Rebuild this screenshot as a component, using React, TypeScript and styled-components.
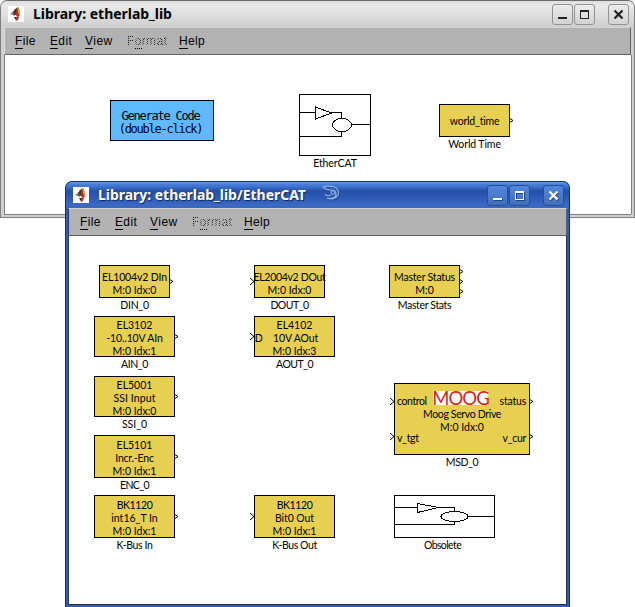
import React from "react";
import styled, { createGlobalStyle, css } from "styled-components";

const Global = createGlobalStyle`
  html, body { margin: 0; padding: 0; }
  body { width: 635px; height: 607px; overflow: hidden; background: #fff; }
  * { box-sizing: border-box; }
`;

const Desktop = styled.div`
  position: relative;
  width: 635px;
  height: 607px;
  overflow: hidden;
  background: #fff;
`;

const BackWindow = styled.section`
  position: absolute;
  left: 0;
  top: 0;
  width: 635px;
  height: 218px;
  display: flex;
  flex-direction: column;
  padding: 0 3px 3px;
  border: 1px solid #808080;
  border-top-color: #6c6c6c;
  border-radius: 7px 7px 0 0;
  background: #d0d0d0;
`;

const FrontWindow = styled.section`
  position: absolute;
  left: 65px;
  top: 181px;
  width: 505px;
  height: 426px;
  display: flex;
  flex-direction: column;
  padding: 0 2px 2px;
  border: 1px solid #152f66;
  border-bottom-width: 0;
  border-radius: 7px 7px 0 0;
  background: #2e5cb6;
`;

const TitleBar = styled.header<{ $active?: boolean }>`
  display: flex;
  align-items: center;
  flex: none;
  height: 26px;
  margin: 0 ${(p) => (p.$active ? "-2px" : "-3px")};
  padding: 0 5px 0 7px;
  border-radius: 6px 6px 0 0;
  font: bold 14px/18px "Noto Sans", sans-serif;
  ${(p) =>
    p.$active
      ? css`
          color: #fff;
          text-shadow: 1px 1px 1px #10285c;
          background: linear-gradient(#6c9ff0 0, #4a80dc 2px, #3b70cb 5px, #2850a4 9px, #2b57b2 14px, #3b69c4 23px, #3a68c0 26px);
        `
      : css`
          color: #000;
          background: linear-gradient(#dedede 0, #e8e8e8 4px, #dedede 14px, #cecece 26px);
        `}
`;

const Title = styled.h1`
  margin: 0 0 0 9px;
  font: inherit;
  letter-spacing: -0.03px;
  white-space: nowrap;
`;

const Controls = styled.div`
  display: flex;
  gap: 1px;
  margin-left: auto;
`;

const ControlButton = styled.button<{ $active?: boolean; $gap?: boolean }>`
  display: grid;
  place-items: center;
  width: 21px;
  height: 21px;
  margin: 0 0 0 ${(p) => (p.$gap ? 12 : 0)}px;
  padding: 0;
  border-radius: 3px;
  ${(p) =>
    p.$active
      ? css`
          border: 1px solid #284f94;
          color: #fff;
          background: linear-gradient(#5286dd, #416fb9);
          svg { filter: drop-shadow(1px 1px 0 #234680); }
        `
      : css`
          border: 1px solid #929292;
          color: #222;
          background: linear-gradient(#ececec, #d2d2d2);
        `}
`;

const MenuBar = styled.nav<{ $active?: boolean }>`
  display: flex;
  flex: none;
  height: 28px;
  padding: 6px 0 0 ${(p) => (p.$active ? 11 : 10)}px;
  border-top: 1px solid #d4d4d4;
  border-bottom: 1px solid #636363;
  border-right: 1px solid #606060;
  border-left: 1px solid ${(p) => (p.$active ? "#2a3a5c" : "#dcdcdc")};
  background: #b2b2b2;
  font: 12px/15px "Liberation Sans", sans-serif;
  letter-spacing: 0.35px;
`;

const MenuItem = styled.span<{ $width: number; $disabled?: boolean }>`
  width: ${(p) => p.$width}px;
  white-space: nowrap;
  color: #000;
  ${(p) =>
    p.$disabled &&
    css`
      color: transparent;
      background: conic-gradient(#222 25%, #aaa 0 50%, #222 0 75%, #aaa 0) 0 0 / 2px 2px;
      background-clip: text;
      -webkit-background-clip: text;
    `}
`;

const Mnemonic = styled.span<{ $dotted?: boolean }>`
  display: inline-block;
  height: 15px;
  border-bottom: 1px ${(p) => (p.$dotted ? "dotted" : "solid")} #000;
`;

const Canvas = styled.main<{ $active?: boolean }>`
  position: relative;
  flex: 1;
  background: #fff;
  ${(p) =>
    p.$active
      ? css`
          border: solid #2a2f38;
          border-width: 0 1px 1px 0;
          box-shadow: inset 1px 0 #2a3a5c;
        `
      : css`
          box-shadow: 0 1px #808080, 1px 0 #808080, inset 1px 0 #808080;
        `}
`;

const BlockBox = styled.div<{ $x: number; $y: number; $w: number; $h: number; $fill: string; $top: number }>`
  position: absolute;
  left: ${(p) => p.$x}px;
  top: ${(p) => p.$y}px;
  width: ${(p) => p.$w}px;
  height: ${(p) => p.$h}px;
  display: flex;
  flex-direction: column;
  align-items: center;
  padding-top: ${(p) => p.$top}px;
  border: 1px solid #000;
  background: ${(p) => p.$fill};
  color: #000;
`;

const Line = styled.span<{ $tracking?: number; $mono?: boolean; $shift?: number }>`
  flex: none;
  font: ${(p) => (p.$mono ? '12px/13px "DejaVu Sans Mono", monospace' : "10.5px/13px Lato, sans-serif")};
  letter-spacing: ${(p) => p.$tracking ?? 0}px;
  margin-left: ${(p) => p.$shift ?? 0}px;
  white-space: pre;
`;

const Caption = styled(Line)`
  position: absolute;
  top: 100%;
  left: 50%;
  padding-top: 2px;
  transform: translateX(-50%);
`;

const PortMark = styled.svg<{ $side: "in" | "out"; $y: number }>`
  position: absolute;
  top: ${(p) => p.$y - 4}px;
  ${(p) => (p.$side === "in" ? "left: -5px;" : "right: -5px;")}
  width: 5px;
  height: 7px;
  overflow: visible;
`;

const PortRow = styled.div<{ $pull?: number }>`
  display: flex;
  flex: none;
  justify-content: space-between;
  align-self: stretch;
  align-items: flex-end;
  padding: 0 3px 0 2px;
  margin-top: ${(p) => p.$pull ?? 0}px;
`;

const LogoRow = styled(PortRow)`
  display: grid;
  grid-template-columns: 36px 55px 1fr;
  height: 17px;
  align-items: end;
`;

const StatusName = styled(Line)`
  justify-self: end;
`;

const MoogLogo = styled.div`
  align-self: start;
  height: 14px;
  display: flex;
  justify-content: center;
  background: #fff;
  color: #dc241c;
  font: 18.5px/14px Lato, sans-serif;
  letter-spacing: -1px;
`;

const Sketch = styled.svg`
  flex: none;
`;

const Swirl = styled.svg`
  margin: -4px 0 0 16px;
  filter: drop-shadow(1px 1px 0 #244b94);
`;

const AppIcon = () => (
  <svg width="16" height="16" viewBox="0 0 16 16">
    <path fill="#fff" d="M0 0h16v16H0z" />
    <path fill="#8d8983" d="M2 8 7 4v6z" />
    <path fill="#5a5048" d="M5 5h3v4H5z" />
    <path fill="#5c2a14" d="m6 4 4-3 1 2v5H7z" />
    <path fill="#dca23f" d="m9 1 3 3v4l-2-1z" />
    <path fill="#b8321f" d="m8 4 2 3 2 3-3 1-1-2z" />
    <path fill="#e09a70" d="m11 4 1 0v7l-1-1z" />
    <path fill="#a33c28" d="M7 11h4l-1 3-2 1z" />
    <path fill="#42140e" d="M6 11h2v3z" />
  </svg>
);

const WindowControls = ({ active }: { active?: boolean }) => (
  <Controls>
    <ControlButton $active={active} aria-label="Minimize">
      <svg width="13" height="13"><path d="M2 10h9" stroke="currentColor" strokeWidth="2" /></svg>
    </ControlButton>
    <ControlButton $active={active} aria-label="Maximize">
      <svg width="13" height="13" shapeRendering="crispEdges">
        <path d="M2 2h9v9H2zM3 4v6h7V4z" fill="currentColor" fillRule="evenodd" />
      </svg>
    </ControlButton>
    <ControlButton $active={active} $gap aria-label="Close">
      <svg width="13" height="13"><path d="m2.500 2.500 8 8m0-8-8 8" stroke="currentColor" strokeWidth="2.300" /></svg>
    </ControlButton>
  </Controls>
);

const menus = [
  { name: "File", width: 35 },
  { name: "Edit", width: 35 },
  { name: "View", width: 42 },
  { name: "Format", width: 52, disabled: true },
  { name: "Help", width: 40 },
];

const Menu = ({ active }: { active?: boolean }) => (
  <MenuBar $active={active}>
    {menus.map((m) => {
      const at = m.disabled ? 1 : 0;
      return (
        <MenuItem key={m.name} $width={m.width} $disabled={m.disabled}>
          {m.name.slice(0, at)}
          <Mnemonic $dotted={m.disabled}>{m.name[at]}</Mnemonic>
          {m.name.slice(at + 1)}
        </MenuItem>
      );
    })}
  </MenuBar>
);

type TextLine = [text: string, tracking?: number, shift?: number];

interface BlockProps {
  x: number;
  y: number;
  w: number;
  h: number;
  top?: number;
  fill?: string;
  mono?: boolean;
  lines?: TextLine[];
  caption?: TextLine;
  ins?: number[];
  outs?: number[];
  header?: React.ReactNode;
  footer?: React.ReactNode;
}

const YELLOW = "#e7cf52";

const Block = ({ x, y, w, h, top = 3, fill = YELLOW, mono, lines = [], caption, ins = [], outs = [], header, footer }: BlockProps) => (
  <BlockBox $x={x} $y={y} $w={w} $h={h} $fill={fill} $top={top}>
    {header}
    {lines.map(([text, tracking, shift], i) => (
      <Line key={i} $tracking={tracking} $shift={shift} $mono={mono}>{text}</Line>
    ))}
    {footer}
    {caption && <Caption $tracking={caption[1]} $shift={caption[2]}>{caption[0]}</Caption>}
    {ins.map((p) => (
      <PortMark key={p} $side="in" $y={p}><path d="m0 0 4 3.500L0 7" fill="none" stroke="#000" /></PortMark>
    ))}
    {outs.map((p) => (
      <PortMark key={p} $side="out" $y={p}><path d="m0 1 4 2.500L0 6" fill="none" stroke="#000" /></PortMark>
    ))}
  </BlockBox>
);

const App = () => (
  <>
    <Global />
    <Desktop>
      <BackWindow>
        <TitleBar>
          <AppIcon />
          <Title>Library: etherlab_lib</Title>
          <WindowControls />
        </TitleBar>
        <Menu />
        <Canvas>
          <Block x={106} y={45} w={104} h={41} top={9} fill="#60b9ff" mono
            lines={[["Generate Code", -1.22, -3], ["(double-click)", -1.25, -3]]} />
          <Block x={295} y={39} w={72} h={62} top={0} fill="#fff" caption={["EtherCAT", -0.1]}
            header={
              <Sketch width="70" height="60" fill="none" stroke="#000" shapeRendering="crispEdges">
                <path d="M0 17.500h15.500M15.500 12v12l16-6zM32 17.500h9.500V24M0 41.500h41.500V36M52 29.500h18" />
                <ellipse cx="42" cy="30" rx="9.500" ry="6.500" />
              </Sketch>
            } />
          <Block x={435} y={49} w={71} h={33} top={10} lines={[["world_time", -0.2]]} caption={["World Time", -0.1]} outs={[16]} />
        </Canvas>
      </BackWindow>

      <FrontWindow>
        <TitleBar $active>
          <AppIcon />
          <Title>Library: etherlab_lib/EtherCAT</Title>
          <Swirl width="18" height="17" viewBox="0 0 18 17" fill="none" stroke="#8fb0e3" strokeWidth="1.200">
            <path d="M1 2c4-1 8-1 11 0 4 1 5 5 4 8-2 4-7 5-11 3 5 1 9 0 9-4s-3-4-6-4C5 5 3 4 1 2zM3 9c1 2 4 2 6 1" />
            <circle cx="11" cy="7.500" r="1.800" />
          </Swirl>
          <WindowControls active />
        </TitleBar>
        <Menu active />
        <Canvas $active>
          <Block x={31} y={29} w={71} h={33} top={5} lines={[["EL1004v2 DIn", -0.15], ["M:0 Idx:0"]]} caption={["DIN_0", -0.3]} outs={[16]} />
          <Block x={186} y={29} w={71} h={33} top={5} lines={[["EL2004v2 DOut", -0.3], ["M:0 Idx:0"]]} caption={["DOUT_0", -0.5]} ins={[16]} />
          <Block x={321} y={29} w={71} h={33} top={5} lines={[["Master Status", -0.2], ["M:0"]]} caption={["Master Stats", -0.35]} outs={[6, 16, 26]} />

          <Block x={26} y={80} w={81} h={41} top={2} lines={[["EL3102"], ["-10..10V AIn", -0.15], ["M:0 Idx:1"]]} caption={["AIN_0", -0.4]} outs={[20]} />
          <Block x={186} y={80} w={81} h={41} top={2} lines={[["EL4102"], ["D    10V AOut", -0.1, -16], ["M:0 Idx:3"]]} caption={["AOUT_0", -0.55]} ins={[20]} />

          <Block x={26} y={140} w={81} h={41} top={2} lines={[["EL5001"], ["SSI Input", 0.1], ["M:0 Idx:0"]]} caption={["SSI_0"]} outs={[20]} />
          <Block x={26} y={199} w={81} h={43} top={3} lines={[["EL5101"], ["Incr.-Enc", -0.2], ["M:0 Idx:1"]]} caption={["ENC_0", -0.6]} outs={[21]} />
          <Block x={26} y={259} w={81} h={43} top={3} lines={[["BK1120", -0.4], ["int16_T In"], ["M:0 Idx:1"]]} caption={["K-Bus In", -0.35]} outs={[21]} />
          <Block x={186} y={259} w={81} h={43} top={3} lines={[["BK1120", -0.4], ["Bit0 Out", -0.1], ["M:0 Idx:1"]]} caption={["K-Bus Out", -0.4]} ins={[21]} />

          <Block x={326} y={147} w={136} h={72} top={7} lines={[["Moog Servo Drive", -0.35], ["M:0 Idx:0"]]} caption={["MSD_0", -0.4]}
            ins={[18, 53]} outs={[18, 53]}
            header={
              <LogoRow>
                <Line $tracking={-0.4}>control</Line>
                <MoogLogo>MOOG</MoogLogo>
                <StatusName $tracking={-0.2}>status</StatusName>
              </LogoRow>
            }
            footer={
              <PortRow $pull={-2}>
                <Line $tracking={-0.3}>v_tgt</Line>
                <Line $tracking={-0.3}>v_cur</Line>
              </PortRow>
            } />

          <Block x={326} y={259} w={101} h={43} top={0} fill="#fff" caption={["Obsolete", -0.6, -2]}
            header={
              <Sketch width="99" height="41" fill="none" stroke="#000" shapeRendering="crispEdges">
                <path d="M0 11.500h22.500M22.500 7.500v9l21-5zM43 11.500h16.500V16M0 28.500h59.500V25M73 20.500h26" />
                <ellipse cx="59.500" cy="20.500" rx="13.500" ry="5" />
              </Sketch>
            } />
        </Canvas>
      </FrontWindow>
    </Desktop>
  </>
);

export default App;
